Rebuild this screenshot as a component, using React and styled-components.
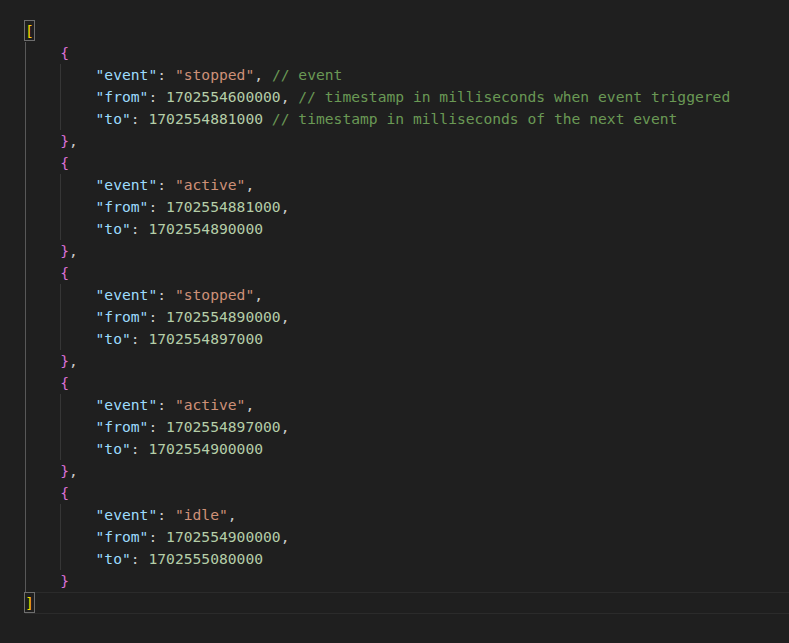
import styled, { createGlobalStyle } from "styled-components";

const GlobalStyle = createGlobalStyle`
  html, body {
    margin: 0;
    padding: 0;
    background: #1f1f1f;
  }
`;

const Editor = styled.div`
  width: 789px;
  height: 643px;
  box-sizing: border-box;
  padding: 20px 0 0 25px;
  background: #1f1f1f;
  font-family: "DejaVu Sans Mono", "Liberation Mono", monospace;
  font-size: 14.65px;
  color: #cccccc;
  overflow: hidden;
`;

const Line = styled.div`
  height: 22px;
  line-height: 22px;
  white-space: pre;
  box-shadow: ${(p) =>
    p.$current ? "inset 0 1px 0 #2b2b2b, inset 0 -1px 0 #2b2b2b" : "none"};
`;

const Indent = styled.span`
  display: inline-block;
  width: 4ch;
  height: 22px;
  vertical-align: top;
  box-sizing: border-box;
  border-left: 1px solid ${(p) => (p.$active ? "#585858" : p.$guide ? "#363636" : "transparent")};
`;

const Match = styled.span`
  display: inline-block;
  height: 21px;
  line-height: 20px;
  vertical-align: top;
  box-sizing: border-box;
  border: 1px solid #6e6e6e;
  margin-left: -1px;
  color: #ffd700;
`;

const Brace = styled.span`
  color: #da70d6;
`;

const Key = styled.span`
  color: #9cdcfe;
`;

const Str = styled.span`
  color: #ce9178;
`;

const Num = styled.span`
  color: #b5cea8;
`;

const Comment = styled.span`
  color: #6a9955;
`;

const events = [
  {
    event: "stopped",
    from: 1702554600000,
    to: 1702554881000,
    notes: ["event", "timestamp in milliseconds when event triggered", "timestamp in milliseconds of the next event"],
  },
  { event: "active", from: 1702554881000, to: 1702554890000 },
  { event: "stopped", from: 1702554890000, to: 1702554897000 },
  { event: "active", from: 1702554897000, to: 1702554900000 },
  { event: "idle", from: 1702554900000, to: 1702555080000 },
];

function Note({ text, comma }) {
  if (!text) return comma ? "," : null;
  return (
    <>
      {comma ? ", " : " "}
      <Comment>// {text}</Comment>
    </>
  );
}

function Prop({ name, children, note, comma }) {
  return (
    <Line>
      <Indent $active />
      <Indent $guide />
      <Key>"{name}"</Key>: {children}
      <Note text={note} comma={comma} />
    </Line>
  );
}

export default function App() {
  return (
    <>
      <GlobalStyle />
      <Editor>
        <Line>
          <Match>[</Match>
        </Line>
        {events.map((e, i) => {
          const notes = e.notes || [];
          return (
            <div key={i}>
              <Line>
                <Indent $active />
                <Brace>{"{"}</Brace>
              </Line>
              <Prop name="event" note={notes[0]} comma>
                <Str>"{e.event}"</Str>
              </Prop>
              <Prop name="from" note={notes[1]} comma>
                <Num>{e.from}</Num>
              </Prop>
              <Prop name="to" note={notes[2]}>
                <Num>{e.to}</Num>
              </Prop>
              <Line>
                <Indent $active />
                <Brace>{"}"}</Brace>
                {i < events.length - 1 ? "," : ""}
              </Line>
            </div>
          );
        })}
        <Line $current>
          <Match>]</Match>
        </Line>
      </Editor>
    </>
  );
}
